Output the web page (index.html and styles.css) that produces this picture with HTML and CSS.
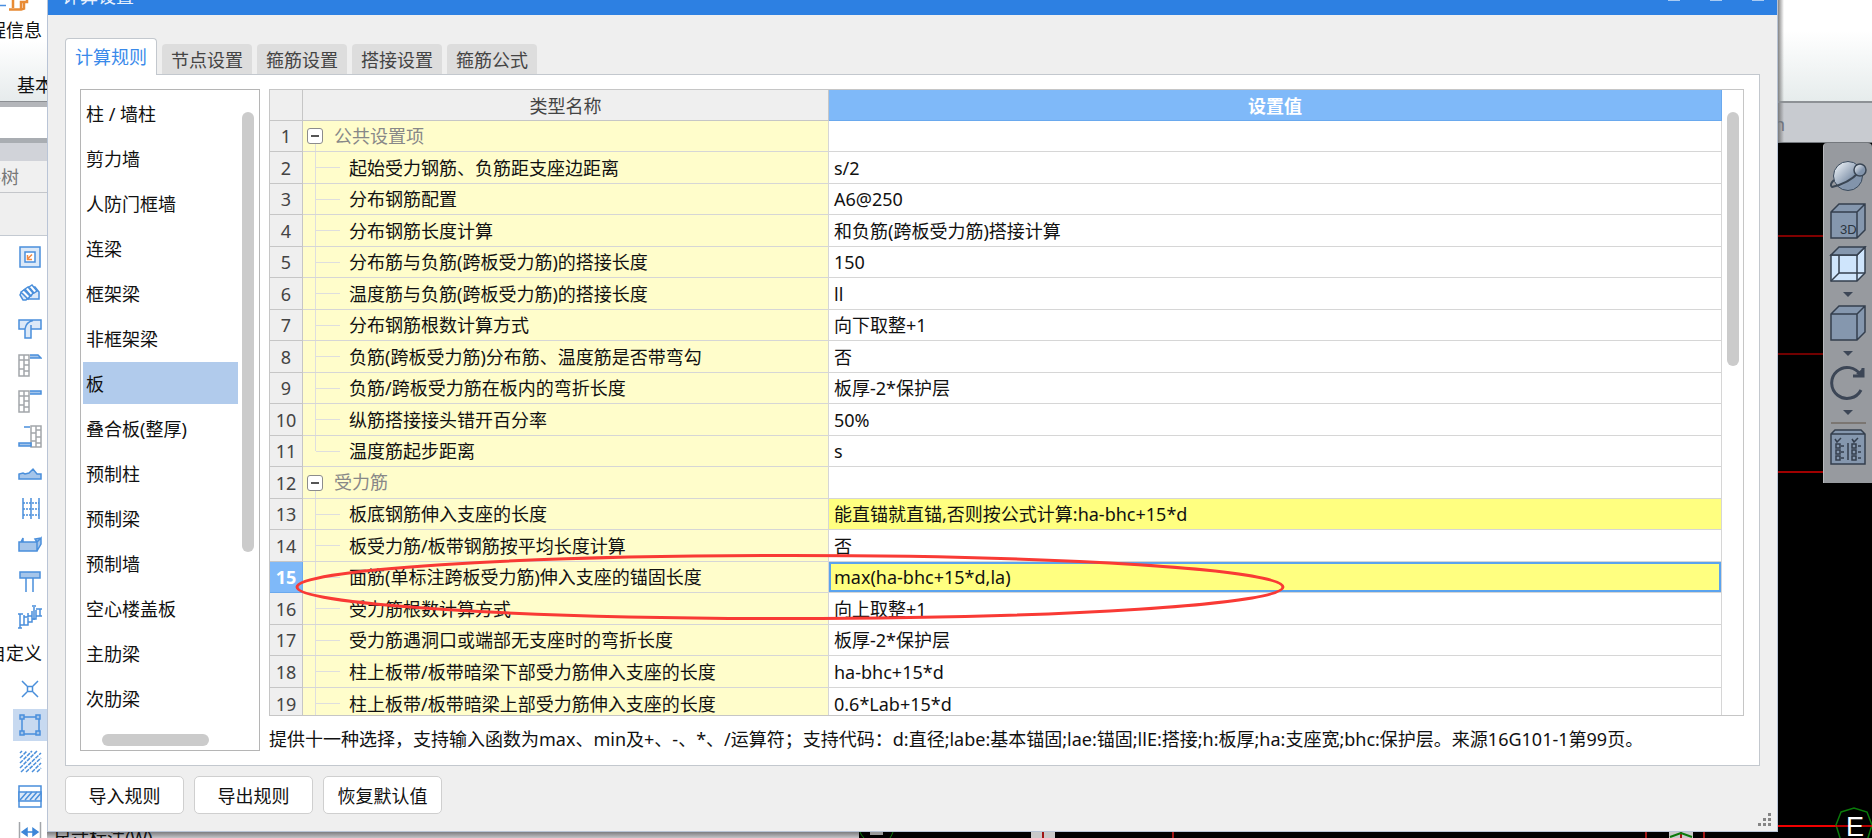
FILE: index.html
```html
<!DOCTYPE html>
<html lang="zh-CN">
<head>
<meta charset="utf-8">
<title>计算设置</title>
<link rel="stylesheet" href="styles.css">
</head>
<body>
<div class="app">
  <aside class="left">
    <div class="ribbon">
      <svg class="ribbon-icon" width="30" height="11" viewBox="0 0 30 11"><path d="M0 5.500h6" stroke="#4a8fe0" stroke-width="1.500"/><path d="M9 9.500h12V2h6V0M13 8V0M21 9.500l3-1V2" stroke="#e88b35" stroke-width="2.500" fill="none"/></svg>
      <span class="ribbon-label">工程信息</span>
      <span class="ribbon-group">基本</span>
    </div>
    <div class="combo-row"><div class="combo"></div></div>
    <div class="dock-head"></div>
    <div class="dock-tab">构件树</div>
    <div class="dock-tools"></div>
    <nav class="tools">
      <button class="tool" aria-label="筏板"><svg width="24" height="24" viewBox="0 0 24 24"><path class="soft" d="M2 2h20v20H2z"/><path class="wht" d="M7 7h10v10H7z"/><path d="M14 9.500l-4 4M9.500 10v4.500H14" stroke="#ee8844" fill="none" stroke-width="1.500"/></svg></button>
      <button class="tool" aria-label="集水坑"><svg width="24" height="24" viewBox="0 0 24 24"><path class="soft" d="M8 18h13V11l-4-5h-3M3 12l3-3 6 6-4 4H5l-3-5z"/><path class="wht" d="M3 11l3-2 6 6-2 3zM7 8l3-2 5 6-2 3zM11 6l3-2 5 6-3 2z"/></svg></button>
      <button class="tool" aria-label="柱墩"><svg width="24" height="24" viewBox="0 0 24 24"><path class="soft" d="M1 3h22v9H13v9H7v-9H1zM7 12q1-7 8-8.500M13 12V8"/></svg></button>
      <button class="tool" aria-label="挑檐"><svg width="24" height="24" viewBox="0 0 24 24"><path class="gry" d="M1 2h10v21H1zM6 2v21M1 16h5M1 7h5M6 12h5M6 7h5M6 18h5"/><path class="mid" d="M12 2h8l3 3H12"/></svg></button>
      <button class="tool" aria-label="腰线"><svg width="24" height="24" viewBox="0 0 24 24"><path class="gry" d="M1 2h10v21H1zM6 2v21M1 16h5M1 7h5M6 12h5M6 7h5M6 18h5"/><path class="mid" d="M12 2h11v3H12"/></svg></button>
      <button class="tool" aria-label="飘窗"><svg width="24" height="24" viewBox="0 0 24 24"><path class="gry" d="M13 1h10v21H13zM18 1v21M13 8h5M13 16h5M18 5h5M18 12h5M18 18h5"/><path class="mid" d="M6 2h6M1 18h12v3H1z"/></svg></button>
      <button class="tool" aria-label="土方"><svg width="24" height="24" viewBox="0 0 24 24"><path class="mid" d="M1 18v-5l4-1 2 1 4-1 4-4 4 5h4v5z"/></svg></button>
      <button class="tool" aria-label="栏杆"><svg width="24" height="24" viewBox="0 0 24 24"><path class="ln" d="M5 1v21M13 1v21M21 1v21"/><path class="ln" stroke-dasharray="2 1" d="M5 6h16M5 12h16M5 18h16"/></svg></button>
      <button class="tool" aria-label="压顶"><svg width="24" height="24" viewBox="0 0 24 24"><path class="mid" d="M1 9h18v9H1zM3 9l2-4v4M19 9l4-4v6l-4 7M19 9l-2-3 6-1"/></svg></button>
      <button class="tool" aria-label="独立基础"><svg width="24" height="24" viewBox="0 0 24 24"><path class="mid" d="M2 3h20v6H2z"/><path class="ln" d="M8 9v14M15 9v14"/></svg></button>
      <button class="tool" aria-label="梯段"><svg width="24" height="24" viewBox="0 0 24 24"><path class="ln" d="M0 9h5M0 23h4M2 9v14M2 20h4V10M6 20h4v-7M6 12h4V8M10 17h4v-6M10 11h4V6M14 14h4V5M16 2v13M14 1h4M18 4h6M18 11h6M22 4v7"/></svg></button>
      <span class="tool-group">自定义</span>
      <button class="tool" aria-label="自定义点"><svg width="24" height="24" viewBox="0 0 24 24"><path class="ln" d="M9.500 9.500h5v5h-5zM4 4l5 5M15 15l5 5M20 4l-5 5M9 15l-5 5"/></svg></button>
      <button class="tool tool-on" aria-label="自定义面"><svg width="24" height="24" viewBox="0 0 24 24"><path class="ln" d="M4 4h17v17H4z"/><path class="mid" d="M2 2h4v4H2zM18 2h4v4h-4zM18 18h4v4h-4zM2 18h4v4H2z"/></svg></button>
      <button class="tool" aria-label="填充"><svg width="24" height="24" viewBox="0 0 24 24"><path class="ln" stroke-dasharray="4 1" d="M2 4l2-2M2 9l7-7M2 14L14 2M2 19L19 2M3 23L23 4M8 23L23 9M14 23l9-9M19 23l4-4"/></svg></button>
      <button class="tool" aria-label="剖面"><svg width="24" height="24" viewBox="0 0 24 24"><path class="ln" d="M1 1h22v21H1z"/><path class="soft" d="M1 7h22v9H1z"/><path class="ln" d="M2 15l7-8M7 15l7-8M12 15l7-8M17 15l6-7"/></svg></button>
      <button class="tool" aria-label="尺寸标注"><svg width="24" height="24" viewBox="0 0 24 24"><path class="gry" d="M1.500 1v22M22.500 1v22"/><path d="M8 11h8M4 11l5-3.500v7zM20 11l-5-3.500v7z" stroke="#3d86d8" fill="#3d86d8"/></svg></button>
    </nav>
  </aside>

  <main class="center">
    <section class="dialog" role="dialog" aria-labelledby="dlg-title">
      <header class="titlebar">
        <h1 class="title" id="dlg-title">计算设置</h1>
        <div class="winbtns"><span></span><span></span><span></span></div>
      </header>
      <div class="content">
        <div class="tabs" role="tablist">
          <button class="tab tab-on" role="tab" aria-selected="true">计算规则</button>
          <button class="tab" role="tab">节点设置</button>
          <button class="tab" role="tab">箍筋设置</button>
          <button class="tab" role="tab">搭接设置</button>
          <button class="tab" role="tab">箍筋公式</button>
        </div>
        <div class="pane">
          <div class="list">
            <div class="list-items">
              <button class="item">柱 / 墙柱</button>
              <button class="item">剪力墙</button>
              <button class="item">人防门框墙</button>
              <button class="item">连梁</button>
              <button class="item">框架梁</button>
              <button class="item">非框架梁</button>
              <button class="item item-on">板</button>
              <button class="item">叠合板(整厚)</button>
              <button class="item">预制柱</button>
              <button class="item">预制梁</button>
              <button class="item">预制墙</button>
              <button class="item">空心楼盖板</button>
              <button class="item">主肋梁</button>
              <button class="item">次肋梁</button>
            </div>
            <div class="vbar"><div class="list-thumb"></div></div>
            <div class="hbar"></div>
          </div>
          <div class="detail">
            <div class="gridbox">
              <table class="grid">
                <colgroup><col class="c-num"><col class="c-name"><col></colgroup>
                <thead><tr><th></th><th>类型名称</th><th class="th-on">设置值</th></tr></thead>
                <tbody>
                  <tr><th>1</th><td class="group"><button class="fold" aria-label="折叠"></button>公共设置项</td><td></td></tr>
                  <tr><th>2</th><td class="leaf">起始受力钢筋、负筋距支座边距离</td><td>s/2</td></tr>
                  <tr><th>3</th><td class="leaf">分布钢筋配置</td><td>A6@250</td></tr>
                  <tr><th>4</th><td class="leaf">分布钢筋长度计算</td><td>和负筋(跨板受力筋)搭接计算</td></tr>
                  <tr><th>5</th><td class="leaf">分布筋与负筋(跨板受力筋)的搭接长度</td><td>150</td></tr>
                  <tr><th>6</th><td class="leaf">温度筋与负筋(跨板受力筋)的搭接长度</td><td>ll</td></tr>
                  <tr><th>7</th><td class="leaf">分布钢筋根数计算方式</td><td>向下取整+1</td></tr>
                  <tr><th>8</th><td class="leaf">负筋(跨板受力筋)分布筋、温度筋是否带弯勾</td><td>否</td></tr>
                  <tr><th>9</th><td class="leaf">负筋/跨板受力筋在板内的弯折长度</td><td>板厚-2*保护层</td></tr>
                  <tr><th>10</th><td class="leaf">纵筋搭接接头错开百分率</td><td>50%</td></tr>
                  <tr><th>11</th><td class="leaf leaf-last">温度筋起步距离</td><td>s</td></tr>
                  <tr><th>12</th><td class="group"><button class="fold" aria-label="折叠"></button>受力筋</td><td></td></tr>
                  <tr><th>13</th><td class="leaf">板底钢筋伸入支座的长度</td><td class="changed">能直锚就直锚,否则按公式计算:ha-bhc+15*d</td></tr>
                  <tr><th>14</th><td class="leaf">板受力筋/板带钢筋按平均长度计算</td><td>否</td></tr>
                  <tr><th class="th-on">15</th><td class="leaf">面筋(单标注跨板受力筋)伸入支座的锚固长度</td><td class="changed current">max(ha-bhc+15*d,la)</td></tr>
                  <tr><th>16</th><td class="leaf">受力筋根数计算方式</td><td>向上取整+1</td></tr>
                  <tr><th>17</th><td class="leaf">受力筋遇洞口或端部无支座时的弯折长度</td><td>板厚-2*保护层</td></tr>
                  <tr><th>18</th><td class="leaf">柱上板带/板带暗梁下部受力筋伸入支座的长度</td><td>ha-bhc+15*d</td></tr>
                  <tr><th>19</th><td class="leaf">柱上板带/板带暗梁上部受力筋伸入支座的长度</td><td>0.6*Lab+15*d</td></tr>
                </tbody>
              </table>
              <div class="vbar"><div class="grid-thumb"></div></div>
              <svg class="mark" width="990" height="68" viewBox="0 0 990 68"><ellipse cx="495" cy="34" rx="493" ry="31.500" fill="none" stroke="#f93a35" stroke-width="3"/></svg>
            </div>
            <p class="hint">提供十一种选择，支持输入函数为max、min及+、-、*、/运算符；支持代码：d:直径;labe:基本锚固;lae:锚固;llE:搭接;h:板厚;ha:支座宽;bhc:保护层。来源16G101-1第99页。</p>
          </div>
        </div>
        <footer class="actions">
          <button class="btn">导入规则</button>
          <button class="btn">导出规则</button>
          <button class="btn">恢复默认值</button>
          <svg class="grip" width="14" height="14" viewBox="0 0 14 14"><path d="M10 1h3v3h-3zM5 6h3v3H5zM10 6h3v3h-3zM0 11h3v3H0zM5 11h3v3H5zM10 11h3v3h-3z" fill="#858585"/></svg>
        </footer>
      </div>
    </section>
    <div class="under">
      <div class="under-dock">尺寸标注(W)</div>
      <svg class="under-view" height="6" width="919" viewBox="0 0 919 6"><path d="M172 0h24v6h-24zM810 0h24v6h-24z" fill="#c9c9c9"/><path d="M1 0q1 3 4 6M34 0q-1 3-3 6" stroke="#0a7a0a" fill="none"/><path d="M11 0h13v3H11z" fill="#999"/><path d="M184 0v6M314 0v6M787 0v6M822 0v6M845 0v6" stroke="#a01515" stroke-width="2"/><path d="M811 5l11-4 11 4" stroke="#0a7a0a" stroke-width="2" fill="none"/></svg>
    </div>
  </main>

  <aside class="right">
    <div class="r-ribbon"></div>
    <div class="r-bar">n</div>
    <div class="view">
      <div class="axes"></div>
      <div class="viewbar">
        <button class="vb" aria-label="动态观察"><svg width="38" height="36" viewBox="0 0 38 36"><defs><linearGradient id="orb" x1="0" y1="0" x2="1" y2="1"><stop offset="0.100" stop-color="#e8eef4"/><stop offset="0.600" stop-color="#8294ab"/></linearGradient></defs><circle cx="19" cy="18" r="14.500" fill="url(#orb)" stroke="#3a4a5c"/><path d="M29 15Q20 25 3 29q-3-2 2-7" fill="none" stroke="#3a4654" stroke-width="2"/><circle cx="31" cy="12" r="6" fill="url(#orb)" stroke="#3a4654" stroke-width="1.500"/></svg></button>
        <button class="vb" aria-label="三维"><svg width="38" height="36" viewBox="0 0 38 36"><path class="cube" d="M2 9l8-8h26v26l-8 8H2zM2 9h26v26M28 9l8-8"/><text x="11" y="31" class="cube-text">3D</text></svg></button>
        <button class="vb" aria-label="线框"><svg width="38" height="36" viewBox="0 0 38 36"><path class="glass" d="M2 9h26l8-8v26l-8 8H2z"/><path class="cube" d="M2 9l8-8h26l-8 8z"/><path class="edge" d="M28 9v26M10 9v18h26M10 27l-8 8"/></svg></button>
        <i class="caret"></i>
        <button class="vb" aria-label="实体"><svg width="38" height="36" viewBox="0 0 38 36"><path class="cube" d="M2 9l8-8h26v26l-8 8H2zM2 9h26v26M28 9l8-8"/></svg></button>
        <i class="caret"></i>
        <button class="vb" aria-label="旋转"><svg width="38" height="36" viewBox="0 0 38 36"><path d="M31.500 11A15.500 15.500 0 1 0 32 26" fill="none" stroke="#3c4656" stroke-width="3"/><path d="M24 12h10V4" fill="none" stroke="#3c4656" stroke-width="3"/><path d="M27 10l6-5v7z" fill="#3c4656"/></svg></button>
        <i class="caret"></i>
        <hr class="sep">
        <button class="vb" aria-label="显示设置"><svg width="38" height="36" viewBox="0 0 38 36"><path class="cube" d="M2 5l4-4h26l4 4v30H2zM2 5h34"/><path class="edge" d="M19 14v17M6 10l2 3 4-4M23 10l2 3 4-4M7 15h4v4H7zM7 21h4v4H7zM7 27h4v4H7zM23 15h4v4h-4zM23 21h4v4h-4zM23 27h4v4h-4zM12 17h3M12 23h3M12 29h3M29 17h3M29 23h3M29 29h3"/></svg></button>
      </div>
      <svg class="axis-end" width="94" height="34" viewBox="1 0 94 34"><path d="M0 22h95" stroke="#f00000" stroke-width="2"/><path d="M64 8l13-4 13 4 5 13-5 16H64l-5-16z" fill="#000" stroke="#0a7a0a" stroke-width="1.500"/><path d="M59 22h36" stroke="#f00000" stroke-width="1.500"/><text x="69" y="32" class="axis-text">E</text></svg>
    </div>
  </aside>
</div>
</body>
</html>
```

FILE: styles.css
```css
* { box-sizing: border-box; }

body {
  margin: 0;
  font: 18px/24px "Noto Sans", "Noto Sans CJK SC", sans-serif;
  color: #111;
  overflow: hidden;
}

button {
  font: inherit;
  color: inherit;
  border: 0;
  padding: 0;
  background: none;
  white-space: nowrap;
}

.app {
  display: grid;
  grid-template-columns: 47px minmax(0, 1fr) 94px;
  height: 100vh;
  background: #000;
}

/* left dock */
.left {
  display: flex;
  flex-direction: column;
  min-height: 0;
  overflow: hidden;
  background: #fff;
}

.ribbon {
  flex: none;
  display: flex;
  flex-direction: column;
  height: 107px;
  border-bottom: 5px solid #b4b6ba;
  background: linear-gradient(#fff 40%, #e6ebec);
  box-shadow: inset 0 -1px #8c8f93;
}

.ribbon-icon { flex: none; }

.ribbon-label {
  align-self: flex-end;
  margin: 7px 5px 0 0;
  white-space: nowrap;
}

.ribbon-group {
  margin: 31px 0 0 17px;
  white-space: nowrap;
}

.combo-row {
  flex: none;
  height: 36px;
  border-bottom: 5px solid #a9adb2;
  background: #fff;
}

.dock-head {
  flex: none;
  height: 18px;
  background: #d1d3d9;
}

.dock-tab {
  flex: none;
  display: flex;
  justify-content: flex-end;
  align-items: center;
  height: 32px;
  padding-right: 28px;
  border-bottom: 1px solid #c4c6ca;
  background: #f0f0f0;
  color: #777;
  white-space: nowrap;
}

.dock-tools {
  flex: none;
  height: 43px;
  border-bottom: 1px solid #c4cad2;
  background: #efefef;
}

.tools {
  display: flex;
  flex-direction: column;
  padding-top: 3px;
}

.tool {
  flex: none;
  display: grid;
  place-items: center;
  height: 36px;
  padding-left: 13px;
}

.tool-on {
  height: 32px;
  margin: 2px 0 2px 13px;
  padding: 0;
  background: #c7d9f0;
}

.tool-group {
  flex: none;
  align-self: flex-end;
  margin-right: 5px;
  line-height: 36px;
  white-space: nowrap;
}

.tool path { stroke-width: 1.500; }
.soft { fill: #dce9f8; stroke: #4a8fdb; }
.wht { fill: #fff; stroke: #4a8fdb; }
.mid { fill: #a5c5ea; stroke: #4a8fdb; }
.ln { fill: none; stroke: #4a8fdb; }
.gry { fill: none; stroke: #a3a6aa; }

/* dialog */
.center {
  display: flex;
  flex-direction: column;
  min-height: 0;
}

.dialog {
  flex: 1;
  display: flex;
  flex-direction: column;
  min-height: 0;
  border: 1px solid #b9c4d6;
  border-top: 0;
  background: #efefef;
}

.titlebar {
  flex: none;
  display: flex;
  justify-content: space-between;
  align-items: flex-end;
  height: 15px;
  padding: 0 13px 7px 14px;
  background: #2d80e2;
  color: #e8f1fd;
}

.title {
  margin: 0;
  font-size: 18px;
  font-weight: 400;
}

.winbtns {
  display: flex;
  gap: 30px;
  align-self: flex-start;
}

.winbtns span {
  width: 12px;
  height: 1px;
  background: #a9cbf3;
}

.content {
  flex: 1;
  display: flex;
  flex-direction: column;
  min-height: 0;
  padding: 23px 17px 0 17px;
}

.tabs {
  flex: none;
  display: flex;
  align-items: flex-end;
  gap: 5px;
  margin-bottom: -1px;
}

.tab {
  height: 30px;
  margin-bottom: 1px;
  padding: 2px 9px 0;
  border-radius: 4px 4px 0 0;
  background: #ddd;
  color: #444;
}

.tab-on {
  position: relative;
  height: 37px;
  margin-bottom: 0;
  padding-top: 0;
  border: 1px solid #c3c8ce;
  border-bottom: 0;
  background: #fff;
  color: #3a8aea;
}

.pane {
  flex: 1;
  display: flex;
  gap: 9px;
  min-height: 0;
  padding: 14px 15px 14px 14px;
  border: 1px solid #c3c8ce;
  background: #fff;
}

.list {
  flex: none;
  display: grid;
  grid-template-columns: minmax(0, 1fr) 12px;
  grid-template-rows: minmax(0, 1fr) 12px;
  column-gap: 4px;
  width: 180px;
  padding: 2px 5px 4px 2px;
  border: 1px solid #b5b5b5;
}

.list-items {
  display: flex;
  flex-direction: column;
  gap: 3px;
  overflow: hidden;
}

.item {
  flex: none;
  height: 42px;
  padding: 2px 0 0 3px;
  text-align: left;
}

.item-on { background: #b1cbec; }

.vbar { padding-top: 20px; }

.list-thumb,
.grid-thumb,
.hbar {
  border-radius: 6px;
  background: #cbcbcb;
}

.list-thumb { height: 440px; }
.hbar { width: 107px; height: 12px; margin-left: 19px; }

.detail {
  flex: 1;
  display: flex;
  flex-direction: column;
  min-width: 0;
}

.gridbox {
  position: relative;
  flex: 1;
  display: flex;
  align-items: flex-start;
  min-height: 0;
  padding-right: 4px;
  border: 1px solid #c6c6c6;
  overflow: hidden;
}

.gridbox .vbar {
  flex: none;
  width: 12px;
  margin-left: 5px;
  padding-top: 22px;
}

.grid-thumb { height: 254px; }

.grid {
  flex: 1;
  table-layout: fixed;
  border-spacing: 0;
  min-width: 0;
}

.c-num { width: 33px; }
.c-name { width: 526px; }

.grid th,
.grid td {
  height: 31px;
  padding: 0;
  border-right: 1px solid #d6d6d6;
  border-bottom: 1px solid #d6d6d6;
  white-space: nowrap;
}

.grid tbody tr:nth-child(even) > * { height: 32px; }

.grid tbody tr:last-child > * { border-bottom: 0; }

.grid th {
  border-color: #c6c6c6;
  background: #efefef;
  color: #444;
  font-weight: 400;
}

.grid thead th { padding-top: 2px; }

.grid .th-on {
  background: #7fb9f9;
  border-color: #6aa9ee;
  color: #fff;
  font-weight: 700;
}

.grid td { padding-left: 5px; }
.grid .group,
.grid .leaf { background-color: #fffdcb; }

.grid .group {
  padding-left: 4px;
  color: #888;
  background-image: linear-gradient(#dedede, #dedede);
  background-repeat: no-repeat;
  background-size: 1px 7px;
  background-position: 12px 100%;
}

.grid .leaf {
  padding-left: 46px;
  background-image: linear-gradient(#dedede, #dedede), linear-gradient(#dedede, #dedede);
  background-repeat: no-repeat;
  background-size: 1px 100%, 24px 1px;
  background-position: 12px 0, 13px 50%;
}

.grid .leaf-last { background-size: 1px 50%, 24px 1px; }
.grid .changed { background: #ffff80; }

.grid .current {
  box-shadow: inset 0 0 0 2px #5ba3ee;
}

.fold {
  display: inline-block;
  width: 16px;
  height: 16px;
  margin: 0 11px 4px 0;
  border: 1px solid #8c8c8c;
  border-radius: 3px;
  background: linear-gradient(#555, #555) center / 8px 2px no-repeat #fff;
  vertical-align: middle;
}

.mark {
  position: absolute;
  left: 25px;
  top: 463px;
}

.hint {
  flex: none;
  margin: 11px 0 0;
  white-space: nowrap;
}

.actions {
  flex: none;
  display: flex;
  align-items: flex-start;
  gap: 10px;
  padding: 10px 0 17px;
}

.btn {
  width: 119px;
  height: 38px;
  padding-top: 2px;
  border: 1px solid #cfcfcf;
  border-radius: 5px;
  background: #fff;
}

.grip {
  align-self: flex-end;
  margin: 0 -12px -12px auto;
}

/* strip below the dialog */
.under {
  flex: none;
  display: flex;
  height: 6px;
  overflow: hidden;
}

.under-dock {
  flex: 1;
  padding-left: 6px;
  background: linear-gradient(#7d7d80, #c4c4c8);
  line-height: 12px;
  white-space: nowrap;
}

.under-view { flex: none; }

/* right side */
.right {
  display: flex;
  flex-direction: column;
  min-height: 0;
}

.r-ribbon {
  flex: none;
  height: 103px;
  border-bottom: 2px solid #8d9195;
  background: linear-gradient(90deg, #666c, #8880 6px), linear-gradient(#fff 30%, #e6ecec);
}

.r-bar {
  flex: none;
  height: 40px;
  line-height: 42px;
  border-bottom: 1px solid #74787d;
  background: linear-gradient(90deg, #666c, #8880 6px), #c8cbd0;
  color: #6f747c;
  text-indent: -4px;
  overflow: hidden;
}

.view {
  flex: 1;
  display: grid;
  grid-template-columns: 1fr 49px;
  grid-template-rows: auto 1fr;
  min-height: 0;
  background: #000;
}

.axes {
  background: linear-gradient(#000 0 92px, #800000 92px 94px, #000 94px 210px, #700000 210px 212px, #000 212px 328px, #a00000 328px 330px, #000 330px);
}

.viewbar {
  display: flex;
  flex-direction: column;
  align-items: center;
  padding: 15px 0 18px;
  border-left: 1px solid #b9bbbe;
  border-radius: 4px 4px 0 0;
  background: #979a9f;
}

.vb {
  height: 36px;
  margin-bottom: 7px;
}

.vb svg { display: block; }
.vb:first-child { margin-bottom: 9px; }
.vb:last-child { margin: 0; }

.caret {
  margin: 3px 0 8px;
  border: 5px solid transparent;
  border-top-color: #3c4656;
  border-bottom: 0;
}

.sep {
  width: 35px;
  height: 2px;
  margin: 0 0 5px;
  border: 0;
  background: #7b7672;
}

.caret + .sep { margin-top: -1px; }

.cube { fill: #8597ae; stroke: #343f4e; stroke-width: 1.500; }
.glass { fill: #cfe5fc; stroke: #343f4e; stroke-width: 1.500; }
.edge { fill: none; stroke: #343f4e; stroke-width: 1.500; }
.cube-text { font: 13px "Liberation Sans", sans-serif; fill: #2b3440; }

.axis-end {
  grid-column: 1 / -1;
  align-self: end;
}

.axis-text { font: 27px "Liberation Sans", sans-serif; fill: #fff; }
```
